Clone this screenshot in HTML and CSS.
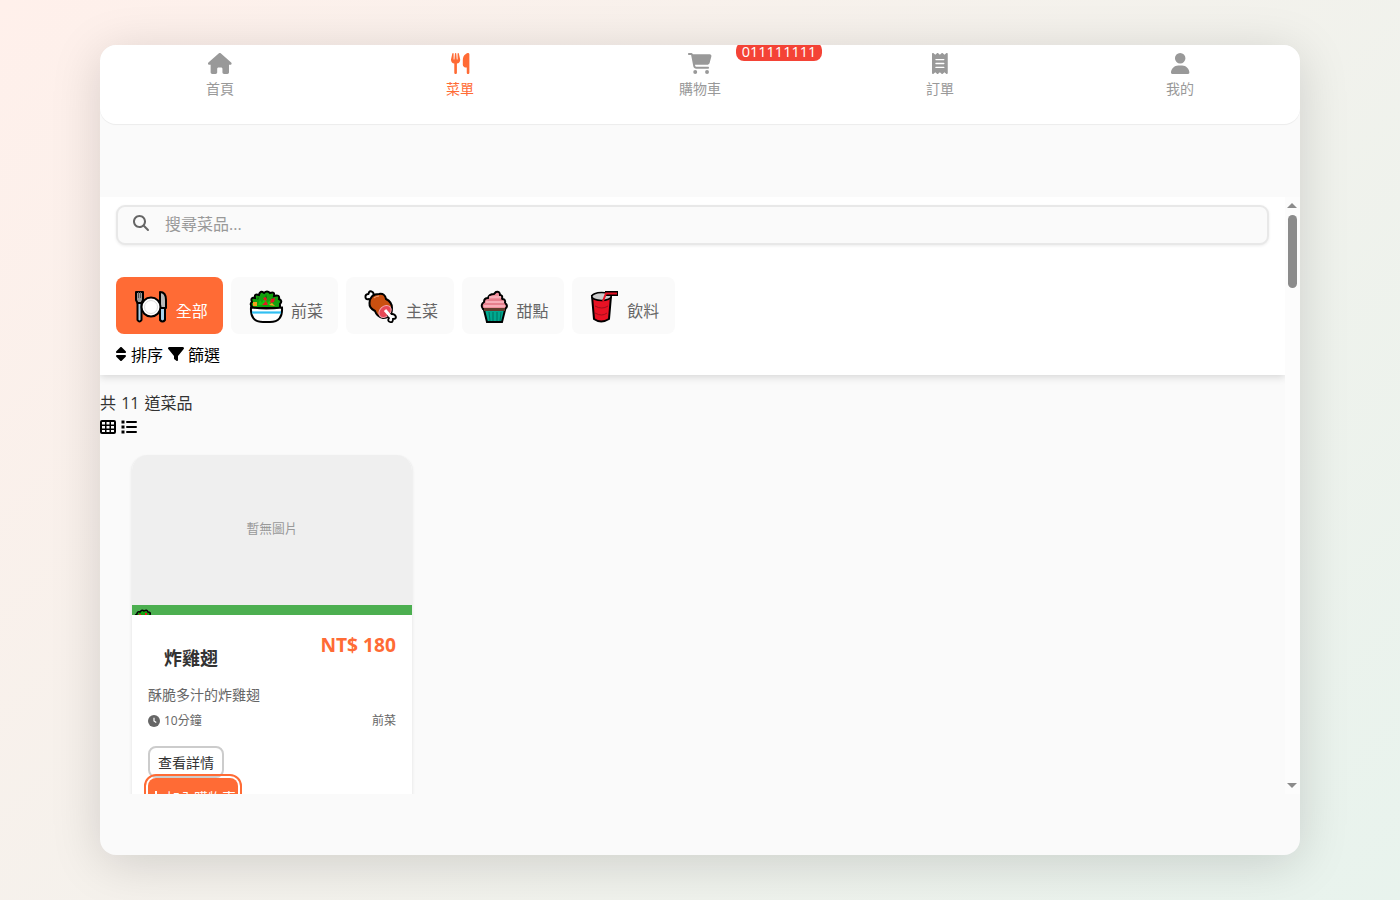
FILE: index.html
```html
<!DOCTYPE html>
<html lang="zh-Hant">
<head>
<meta charset="utf-8">
<title>菜單</title>
<link rel="stylesheet" href="styles.css">
</head>
<body>
<div class="app">
  <nav class="nav">
    <a class="nav-item"><svg class="nav-icon" viewBox="0 0 576 512"><path d="M575.8 255.5c0 18-15 32.1-32 32.1h-32l.7 160.2c0 2.7-.2 5.4-.5 8.1V472c0 22.1-17.9 40-40 40H392c-22.1 0-40-17.9-40-40V384c0-17.7-14.3-32-32-32H256c-17.7 0-32 14.3-32 32v88c0 22.1-17.9 40-40 40H104c-22.1 0-40-17.9-40-40V287.6H32c-18 0-32-14-32-32.1c0-9 3-17 10-24L266.4 8c7-7 15-8 22-8s15 2 21 7L564.8 231.5c8 7 12 15 11 24z"/></svg><span>首頁</span></a>
    <a class="nav-item active"><svg class="nav-icon" viewBox="0 0 448 512"><path d="M416 0C400 0 288 32 288 176V288c0 35.3 28.7 64 64 64h32V480c0 17.7 14.3 32 32 32s32-14.3 32-32V352 240 32c0-17.7-14.3-32-32-32zM64 16C64 7.8 57.9 1 49.7 .1S34.2 4.6 32.4 12.5L2.1 148.8C.7 155.1 0 161.5 0 167.9c0 45.9 35.1 83.6 80 87.7V480c0 17.7 14.3 32 32 32s32-14.3 32-32V255.6c44.9-4.1 80-41.8 80-87.7c0-6.4-.7-12.8-2.1-19.1L191.6 12.5c-1.8-8-9.3-13.3-17.4-12.4S160 7.8 160 16V150.2c0 5.4-4.4 9.8-9.8 9.8c-5.1 0-9.3-3.9-9.8-9L127.9 14.6C127.2 6.3 120.3 0 112 0s-15.2 6.3-15.9 14.6L83.7 151c-.5 5.1-4.7 9-9.8 9c-5.4 0-9.8-4.4-9.8-9.8V16z"/></svg><span>菜單</span></a>
    <a class="nav-item"><svg class="nav-icon" viewBox="0 0 576 512"><path d="M0 24C0 10.7 10.7 0 24 0H69.5c22 0 41.5 12.8 50.6 32h411c26.3 0 45.5 25 38.6 50.4l-41 152.3c-8.5 31.4-37 53.3-69.5 53.3H170.7l5.4 28.5c2.2 11.3 12.1 19.5 23.6 19.5H488c13.3 0 24 10.7 24 24s-10.7 24-24 24H199.7c-34.6 0-64.3-24.6-70.7-58.5L77.4 54.5c-.7-3.8-4-6.5-7.9-6.5H24C10.7 48 0 37.3 0 24zM128 464a48 48 0 1 1 96 0 48 48 0 1 1 -96 0zm336-48a48 48 0 1 1 0 96 48 48 0 1 1 0-96z"/></svg><span>購物車</span><b class="badge">011111111</b></a>
    <a class="nav-item"><svg class="nav-icon" viewBox="0 0 384 512"><path d="M14 2.2C22.5-1.7 32.5-.3 39.6 5.8L80 40.4 120.4 5.8c9-7.7 22.3-7.7 31.2 0L192 40.4 232.4 5.8c9-7.7 22.3-7.7 31.2 0L304 40.4 344.4 5.8c7.1-6.1 17.1-7.5 25.6-3.6s14 12.4 14 21.8V488c0 9.4-5.5 17.9-14 21.8s-18.5 2.5-25.6-3.6L304 471.6l-40.4 34.6c-9 7.7-22.3 7.7-31.2 0L192 471.6l-40.4 34.6c-9 7.7-22.3 7.7-31.2 0L80 471.6 39.6 506.2c-7.1 6.1-17.1 7.5-25.6 3.6S0 497.4 0 488V24C0 14.6 5.5 6.1 14 2.2z"/><path class="rule" d="M96 160H288M96 256H288M96 352H288"/></svg><span>訂單</span></a>
    <a class="nav-item"><svg class="nav-icon" viewBox="0 0 448 512"><path d="M224 256A128 128 0 1 0 224 0a128 128 0 1 0 0 256zm-45.7 48C79.8 304 0 383.8 0 482.3C0 498.7 13.3 512 29.7 512H418.3c16.4 0 29.7-13.3 29.7-29.7C448 383.8 368.2 304 269.7 304H178.3z"/></svg><span>我的</span></a>
  </nav>

  <div class="scroller">
    <main class="view">
      <section class="toolbar">
        <div class="search"><svg class="search-icon" viewBox="0 0 512 512"><path d="M416 208c0 45.9-14.9 88.3-40 122.7L502.6 457.4c12.5 12.5 12.5 32.8 0 45.3s-32.8 12.5-45.3 0L330.7 376c-34.4 25.2-76.8 40-122.7 40C93.1 416 0 322.9 0 208S93.1 0 208 0S416 93.1 416 208zM208 352a144 144 0 1 0 0-288 144 144 0 1 0 0 288z"/></svg><span>搜尋菜品...</span></div>
        <div class="chips">
          <div class="chip selected">
            <svg class="emoji wide" viewBox="0 0 38 34">
              <g stroke="#000" stroke-width="2" stroke-linejoin="round">
                <path fill="#9a9a9a" d="M2 2h7v8l-1.500 3h-4L2 10z"/><path fill="#a9d3ec" d="M3.500 13h4v17q-2 3-4 0z"/>
                <path fill="#b8b8b8" d="M26 2q6 0 6 8v8h-6z"/><path fill="#a9d3ec" d="M26 18h5v12q-2.500 3-5 0z"/>
                <circle cx="17" cy="17" r="9.500" fill="#fff"/>
              </g>
              <path stroke="#555" d="M4.500 2v6M6.500 2v6"/><circle cx="17" cy="17" r="6.500" fill="none" stroke="#ddd"/>
            </svg><span>全部</span></div>
          <div class="chip">
            <svg class="emoji wide" viewBox="0 0 38 34">
              <path fill="#13a10e" stroke="#000" stroke-width="2" d="M4 18Q0 14 3 12Q1 7 6 8Q5 3 10 5Q11 0 15 3Q18 0 21 3Q26 1 25 6Q31 4 30 9Q34 11 31 14L31 18z"/>
              <path fill="#16c60c" d="M9 15l2-5 2 3 3-6 2 6 4-3 1 5z"/>
              <path fill="#0b6a0b" d="M9 6l1 3-2 1zm8-2l1 4-2 1zm6 4l2 1-3 2z"/>
              <path fill="#e81224" d="M14 8l3-1 1 3-2 1zm8 1l4-1-1 4-4 1zm-9 6l4-4 2 4z"/><path fill="#f7a11a" d="M4 12h4v4H4zm16 3l3-2 3 3z"/>
              <path fill="#fff" stroke="#000" stroke-width="2" d="M2 17.500q15 2 31 0Q34 32 21 32H14Q1 32 2 17.500z"/><path stroke="#32bff2" stroke-width="2.200" d="M3 22.500h29"/>
            </svg><span>前菜</span></div>
          <div class="chip">
            <svg class="emoji wide" viewBox="0 0 38 34">
              <g stroke="#000" stroke-width="2" stroke-linejoin="round">
                <path fill="#fff" d="M8 11L5 9Q1 10 1.500 6Q2 4 4.500 4Q5 0 8.500 2Q10 3 9.500 6L12 8z"/>
                <path fill="#ca5010" d="M5.500 13Q6 4 15 4Q21 3 22 9Q28 12 28 18Q28 28 19 28Q13 27 11 21Q5 18 5.500 13z"/>
              </g>
              <path stroke="#f4a37a" d="M10 8q2-2 5-2" fill="none"/>
              <ellipse cx="21" cy="21.500" rx="6.800" ry="5.200" transform="rotate(-42 21 21.500)" fill="#e74856" stroke="#f4a3ae"/>
              <path fill="#fff" stroke="#000" stroke-width="1.800" d="M24 25l4-1Q31 24 32 27Q32 29 29 29Q29 33 26 32Q23 31 25 28z"/><path stroke="#fff" stroke-width="3" d="M21 20l5.500 6.500"/>
            </svg><span>主菜</span></div>
          <div class="chip">
            <svg class="emoji slim" viewBox="0 0 33 34">
              <path fill="#f08f9c" stroke="#000" stroke-width="2" d="M3 19Q0 15 4 12Q4 8 8 8Q9 4 14 4L16 2Q20 1 20 5Q23 5 22 9Q26 9 25 13Q29 16 25 19z"/>
              <path stroke="#f9b8c0" stroke-width="1.500" d="M9 7h12M6 12h18M4 16h21"/><path stroke="#dc707f" d="M8 10h14M4 14h21"/>
              <path fill="#00a88f" stroke="#000" stroke-width="2" d="M4 20h21l-3 12H7z"/><path fill="#603d2c" d="M4 18h21v3H4z"/><path stroke="#00705f" d="M9 22l1 9m3-9v9m4-9v9m4-9l-1 9"/>
            </svg><span>甜點</span></div>
          <div class="chip">
            <svg class="emoji slim" viewBox="0 0 33 34">
              <path fill="#e81224" stroke="#000" stroke-width="2" d="M2 6l2 23q7 5 15 0l2-23z"/><ellipse cx="11.500" cy="6.500" rx="9.700" ry="4" fill="#ccc" stroke="#000" stroke-width="1.600"/>
              <path fill="none" stroke="#000" stroke-width="5" d="M15 3.500h13"/><path fill="none" stroke="#e81224" stroke-width="2" d="M13 11l3-7.500h11"/><path stroke="#9f101b" fill="none" d="M5 16q7 4 13 0M5 23q7 4 12 0"/>
            </svg><span>飲料</span></div>
        </div>
        <div class="actions">
          <svg class="sort" viewBox="0 0 320 512"><path d="M137.400 41.400c12.500-12.500 32.800-12.500 45.300 0l128 128c9.200 9.200 11.900 22.900 6.900 34.900s-16.600 19.800-29.600 19.800H32c-12.900 0-24.600-7.800-29.600-19.800s-2.200-25.700 6.900-34.900l128-128zm0 429.300l-128-128c-9.200-9.200-11.900-22.900-6.900-34.900s16.600-19.800 29.600-19.800H288c12.900 0 24.600 7.800 29.600 19.800s2.200 25.700-6.900 34.900l-128 128c-12.500 12.500-32.800 12.500-45.300 0z"/></svg><span>排序</span>
          <svg class="filter" viewBox="0 0 512 512"><path d="M3.900 54.900C10.500 40.900 24.500 32 40 32H472c15.500 0 29.500 8.900 36.100 22.900s4.600 30.500-5.200 42.500L320 320.900V448c0 12.100-6.800 23.200-17.700 28.600s-23.800 4.300-33.500-3l-64-48c-8.100-6-12.800-15.500-12.800-25.600V320.900L9 97.300C-.7 85.400-2.800 68.800 3.900 54.900z"/></svg><span>篩選</span>
        </div>
      </section>

      <p class="count">共 11 道菜品</p>
      <div class="modes">
        <svg viewBox="0 0 16 16"><path fill-rule="evenodd" d="M2 1h12a2 2 0 0 1 2 2v10a2 2 0 0 1-2 2H2a2 2 0 0 1-2-2V3a2 2 0 0 1 2-2zM2 3v2.500h3V3zm4.500 0v2.500h3V3zM11 3v2.500h3V3zM2 7v2.500h3V7zm4.500 0v2.500h3V7zM11 7v2.500h3V7zM2 11v2h3v-2zm4.500 0v2h3v-2zm4.500 0v2h3v-2z"/></svg>
        <svg viewBox="0 0 16 16"><path d="M.5 1.500h3v3h-3zm0 5h3v3h-3zm0 5h3v3h-3zM6 2h9a1 1 0 0 1 0 2H6a1 1 0 0 1 0-2zm0 5h9a1 1 0 0 1 0 2H6a1 1 0 0 1 0-2zm0 5h9a1 1 0 0 1 0 2H6a1 1 0 0 1 0-2z"/></svg>
      </div>

      <article class="card">
        <div class="photo">暫無圖片</div>
        <div class="tag"><svg viewBox="0 0 18 18"><path fill="#13a10e" stroke="#000" stroke-width="1.500" d="M2 9Q0 6 3 5Q3 2 6 3Q8 0 10 2Q13 0 14 3Q17 3 16 6L17 9z"/><path fill="#e81224" d="M5 5h2v2H5zm6-1h2v2h-2z"/><path fill="#f7a11a" d="M8 6h2v2H8z"/></svg></div>
        <div class="info">
          <div class="title-row"><h3>炸雞翅</h3><strong>NT$ 180</strong></div>
          <p class="desc">酥脆多汁的炸雞翅</p>
          <div class="meta"><span class="time"><svg viewBox="0 0 16 16"><circle cx="8" cy="8" r="8"/><path d="M8 3.500V8l3 2"/></svg>10分鐘</span><span>前菜</span></div>
          <div class="buttons"><button class="detail">查看詳情</button><button class="add"><svg viewBox="0 0 12 14"><path d="M6 1v12M1 7h10"/></svg>加入購物車</button></div>
        </div>
      </article>
    </main>
    <div class="track"><i class="up"></i><i class="thumb"></i><i class="down"></i></div>
  </div>
</div>
</body>
</html>
```
FILE: styles.css
```css
* { box-sizing: border-box; }
body {
  margin: 0;
  height: 900px;
  overflow: hidden;
  padding: 45px 100px;
  background: linear-gradient(135deg, #fff0eb 0%, #e8f3ed 100%);
  font-family: "Open Sans", "Noto Sans CJK TC", sans-serif;
  font-size: 16px;
  color: #333;
}
p, h3 { margin: 0; }
svg { display: block; flex: none; overflow: visible; }
.app {
  height: 810px;
  border-radius: 16px;
  overflow: hidden;
  background: #fafafa;
  box-shadow: 0 8px 50px rgba(0, 0, 0, .15);
}
.nav {
  display: grid;
  grid-template-columns: repeat(5, 1fr);
  height: 79px;
  margin-bottom: 73px;
  background: #fff;
  box-shadow: 0 1px 1px rgba(0, 0, 0, .06);
  border-radius: 16px;
}
.nav-item {
  position: relative;
  display: flex;
  flex-direction: column;
  align-items: center;
  gap: 5px;
  padding-top: 8px;
  font-size: 14px;
  line-height: 20px;
  color: #999;
}
.nav-item.active { color: #ff6b35; }
.nav-icon { height: 21px; fill: currentColor; }
.rule { stroke: #fff; stroke-width: 32; stroke-linecap: round; }
.badge {
  position: absolute;
  top: -3px;
  left: 156px;
  width: 86px;
  height: 19px;
  border-radius: 8px;
  background: #f44336;
  color: #fff;
  font-size: 14.500px;
  font-weight: 400;
  line-height: 20px;
  text-align: center;
}
.scroller { display: flex; height: 597px; overflow: hidden; }
.view { width: 1184.500px; height: 597px; overflow: hidden; }
.toolbar {
  height: 177.500px;
  padding: 8px 15.500px 8px 16px;
  background: #fff;
  box-shadow: 0 2px 8px rgba(0, 0, 0, .15);
}
.search {
  display: flex;
  align-items: center;
  gap: 16px;
  height: 39.500px;
  padding-left: 15px;
  border: 2px solid #e8e8e8;
  border-radius: 9px;
  background: #fafafa;
  box-shadow: 0 1px 3px rgba(0, 0, 0, .08);
  color: #999;
}
.search span { line-height: 24px; padding-bottom: 2px; }
.search-icon { width: 16px; fill: #666; margin-bottom: 3px; }
.chips { display: flex; gap: 8px; margin-top: 32px; }
.chip {
  display: flex;
  height: 57.500px;
  padding: 13px 15.500px 0 16px;
  border-radius: 8px;
  background: #fafafa;
  color: #666;
}
.chip span { line-height: 42px; }
.chip.selected { background: #ff6b35; color: #fff; }
.emoji { height: 34px; fill: none; }
.emoji.wide { width: 38px; margin-left: 1.500px; margin-right: 4.200px; }
.emoji.slim { width: 33px; margin-left: 2px; margin-right: 4px; }
.actions {
  display: flex;
  align-items: center;
  height: 24px;
  margin-top: 8px;
  color: #000;
}
.sort { width: 10px; height: 16px; margin-right: 5px; }
.filter { width: 16px; height: 16px; margin: 0 4px 0 5px; }
.count { padding-top: 16px; line-height: 24px; word-spacing: 1px; }
.modes { display: flex; gap: 5px; padding-top: 4px; }
.modes svg { width: 16px; height: 16px; fill: #000; }
.card {
  width: 282px;
  height: 410px;
  margin: 20px 0 0 31px;
  border: 1px solid #f0f0f0;
  border-top: 0;
  border-radius: 16px;
  overflow: hidden;
  background: #fff;
  box-shadow: 0 1px 3px rgba(0, 0, 0, .06);
}
.photo {
  height: 150px;
  background: #efefef;
  color: #999;
  font-size: 12.800px;
  line-height: 147px;
  text-align: center;
}
.tag { height: 10px; padding: 4px 0 0 2px; overflow: hidden; background: #4caf50; }
.tag svg { width: 18px; }
.info { padding: 16px; }
.title-row { display: flex; justify-content: space-between; }
h3 { padding: 15px 0 1px 16px; font-size: 18px; line-height: 24px; }
.title-row strong { font-size: 19.200px; line-height: 28px; color: #ff6b35; }
.desc { margin-top: 14px; font-size: 14px; line-height: 20px; color: #666; }
.meta {
  display: flex;
  justify-content: space-between;
  margin-top: 7px;
  font-size: 12px;
  line-height: 18px;
  color: #666;
}
.time { display: flex; align-items: center; gap: 4px; }
.time svg { width: 12px; fill: #666; }
.time path { fill: none; stroke: #fff; stroke-width: 1.600; }
.buttons { display: flex; flex-direction: column; align-items: flex-start; margin-top: 16px; }
button {
  padding: 0;
  font: 14px "Open Sans", "Noto Sans CJK TC", sans-serif;
  border-radius: 8px;
}
.detail { width: 76px; height: 32px; border: 2px solid #ccc; background: #fff; color: #333; }
.add {
  display: flex;
  align-items: center;
  justify-content: center;
  gap: 4px;
  width: 90px;
  height: 38px;
  border: 0;
  background: #ff6b35;
  color: #fff;
  outline: 2px solid #ff6b35;
  outline-offset: 2px;
}
.add svg { width: 12px; fill: none; stroke: #fff; stroke-width: 2; }
.track {
  display: flex;
  flex-direction: column;
  align-items: center;
  width: 15.500px;
  padding: 6px 0;
  background: #fcfcfc;
}
.up, .down { border: 5px solid transparent; }
.up { border-top: 0; border-bottom-color: #8b8b8b; }
.thumb { width: 9px; height: 73px; margin-top: 7px; border-radius: 5px; background: #8b8b8b; }
.down { margin-top: auto; border-bottom: 0; border-top-color: #8b8b8b; }
```
